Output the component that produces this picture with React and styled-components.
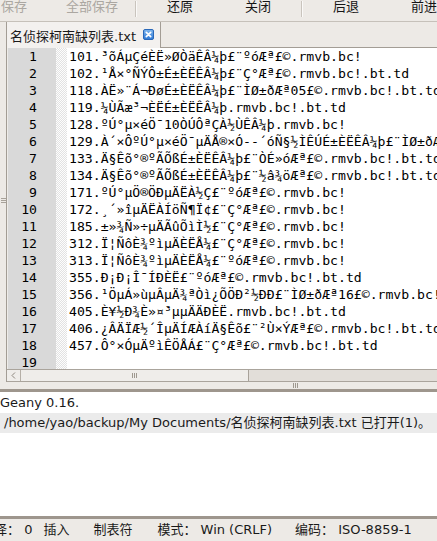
import React from 'react'
import styled, { createGlobalStyle } from 'styled-components'

const uiFont = `"DejaVu Sans", "Noto Sans CJK SC", sans-serif`
const monoFont = `"DejaVu Sans Mono", "Noto Sans CJK SC", monospace`

const GlobalStyle = createGlobalStyle`
  html, body {
    margin: 0;
    padding: 0;
    background: #edeae6;
    overflow: hidden;
  }
`

const Window = styled.div`
  width: 437px;
  height: 541px;
  overflow: hidden;
  display: flex;
  flex-direction: column;
  background: #edeae6;
  font-family: ${uiFont};
  font-size: 13px;
  color: #1a1a1a;
`

const Toolbar = styled.div`
  display: flex;
  flex: none;
  height: 21px;
  margin-left: -25px;
  border-bottom: 1px solid #c6c1ba;
`

const ToolButton = styled.div`
  flex: none;
  width: 78px;
  text-align: center;
  line-height: 14px;
  color: ${({ disabled }) => (disabled ? '#aba7a1' : '#151515')};
`

const ToolSep = styled.div`
  flex: none;
  width: 10px;
  display: flex;
  justify-content: center;
  padding-top: 1px;
  height: 16px;

  &::before {
    content: '';
    width: 1px;
    background: #c9c4bd;
    border-right: 1px solid #faf9f8;
  }
`

const Body = styled.div`
  display: flex;
  flex: none;
  height: 360px;
`

const SideStrip = styled.div`
  flex: none;
  width: 7px;
  border-right: 1px solid #a39d95;
  padding-top: 176px;
  box-sizing: border-box;
`

const SideGrip = styled.div`
  width: 5px;
  height: 5px;
  margin-left: 1px;
  background: repeating-linear-gradient(to bottom, #a8a29a 0 1px, transparent 1px 2px);
`

const Notebook = styled.div`
  flex: 1;
  min-width: 0;
  display: flex;
  flex-direction: column;
`

const TabBar = styled.div`
  display: flex;
  flex: none;
  height: 26px;
`

const Tab = styled.div`
  flex: none;
  width: 154px;
  box-sizing: border-box;
  display: flex;
  align-items: center;
  padding-left: 3px;
  background: #f3f1ef;
  border-right: 1px solid #a39d95;
  white-space: nowrap;
`

const TabLabel = styled.span`
  flex: 1;
`

const TabClose = styled.svg`
  flex: none;
  margin-right: 6px;
  margin-top: -1px;
`

const TabFill = styled.div`
  flex: 1;
  border-bottom: 1px solid #a39d95;
`

const Editor = styled.div`
  flex: 1;
  display: flex;
  overflow: hidden;
  background: #fff;
  font-family: ${monoFont};
  font-size: 13.15px;
  line-height: 17px;
  color: #000;
`

const Gutter = styled.div`
  flex: none;
  width: 49px;
  box-sizing: border-box;
  background: #d9d9d9;
  border-left: 1px solid #eeece9;
  text-align: right;
  padding-right: 19px;
`

const FoldMargin = styled.div`
  flex: none;
  width: 11px;
  background: repeating-conic-gradient(#e2e2e2 0 25%, #fdfdfd 0 50%) 0 0 / 2px 2px;
`

const CodeArea = styled.div`
  flex: 1;
  min-width: 0;
  padding-left: 2px;
  white-space: pre;
  overflow: hidden;
`

const Line = styled.div`
  height: 17px;
`

const HScroll = styled.div`
  flex: none;
  height: 11px;
  display: flex;
  background: #e2ded9;
  border-top: 1px solid #aaa49c;
  border-bottom: 1px solid #aaa49c;
`

const ScrollArrow = styled.div`
  flex: none;
  width: 13px;
  display: flex;
  align-items: center;
  justify-content: center;
  background: #efedea;
  border-right: 1px solid #b5afa7;
`

const ScrollThumb = styled.div`
  flex: none;
  width: 227px;
  display: flex;
  align-items: center;
  justify-content: center;
  background: #efedea;
  border-right: 1px solid #a8a29a;
`

const Grip = styled.div`
  width: 5px;
  height: 5px;
  background: repeating-linear-gradient(to right, #9e988f 0 1px, transparent 1px 2px);
`

const PaneHandle = styled.div`
  flex: none;
  height: 7px;
  display: flex;
  align-items: center;
  padding-left: 293px;
  box-sizing: border-box;
`

const MessagePane = styled.div`
  flex: none;
  height: 124px;
  background: #fff;
  border-top: 3px solid #9e968d;
`

const MessageRow = styled.div`
  height: ${({ h }) => h}px;
  line-height: ${({ h }) => h}px;
  padding-left: ${({ indent }) => indent}px;
  background: ${({ shaded }) => (shaded ? '#ebebeb' : 'transparent')};
  white-space: nowrap;
`

const StatusBar = styled.div`
  flex: none;
  height: 22px;
  display: flex;
  align-items: center;
  border-top: 3px solid #9e968d;
  white-space: nowrap;
  line-height: 22px;
`

const StatusItem = styled.span`
  flex: none;
  margin-left: ${({ gap }) => gap}px;
`

const lines = [
  '101.³õÁµÇéÈË»ØÒäÊÂ¼þ£¨ºóÆª£©.rmvb.bc!',
  '102.¹Å×°ÑÝÔ±É±ÈËÊÂ¼þ£¨Ç°Æª£©.rmvb.bc!.bt.td',
  '118.ÀË»¨Á¬ÐøÉ±ÈËÊÂ¼þ£¨ÌØ±ðÆª05£©.rmvb.bc!.bt.td',
  '119.¼ÙÃæ³¬ÈËÉ±ÈËÊÂ¼þ.rmvb.bc!.bt.td',
  '128.ºÚ°µ×éÖ¯10ÒÚÔªÇÀ½ÙÊÂ¼þ.rmvb.bc!',
  '129.À´×ÔºÚ°µ×éÖ¯µÄÅ®×Ó--´óÑ§½ÌÊÚÉ±ÈËÊÂ¼þ£¨ÌØ±ðÆª£©.rmvb.bc!',
  '133.Ä§Êõ°®ºÃÕßÉ±ÈËÊÂ¼þ£¨ÒÉ»óÆª£©.rmvb.bc!.bt.td',
  '134.Ä§Êõ°®ºÃÕßÉ±ÈËÊÂ¼þ£¨½â¾öÆª£©.rmvb.bc!.bt.td',
  '171.ºÚ°µÖ®ÖÐµÄËÀ½Ç£¨ºóÆª£©.rmvb.bc!',
  '172.¸´»îµÄËÀÍöÑ¶Ï¢£¨Ç°Æª£©.rmvb.bc!',
  '185.±»¾Ñ»÷µÄÃûÕìÌ½£¨Ç°Æª£©.rmvb.bc!',
  '312.Ï¦ÑôÈ¾ºìµÄÈËÅ¼£¨Ç°Æª£©.rmvb.bc!',
  '313.Ï¦ÑôÈ¾ºìµÄÈËÅ¼£¨ºóÆª£©.rmvb.bc!',
  '355.Ð¡Ð¡Î¯ÍÐÈË£¨ºóÆª£©.rmvb.bc!.bt.td',
  '356.¹ÖµÁ»ùµÂµÄ¾ªÒì¿ÕÖÐ²½ÐÐ£¨ÌØ±ðÆª16£©.rmvb.bc!.bt.td',
  '405.È¥½Ð¾È»¤³µµÄÄÐÈË.rmvb.bc!.bt.td',
  '406.¿ÂÄÏÆ½´ÎµÄÍÆÀíÄ§Êõ£¨²Ù×ÝÆª£©.rmvb.bc!.bt.td',
  '457.Ô°×ÓµÄºìÊÖÅÁ£¨Ç°Æª£©.rmvb.bc!.bt.td',
  '',
]

const tools = [
  { label: '保存', disabled: true },
  { label: '全部保存', disabled: true },
  { sep: true },
  { label: '还原' },
  { label: '关闭' },
  { sep: true },
  { label: '后退' },
  { label: '前进' },
]

const status = [
  { text: '选择： 0', gap: -19 },
  { text: '插入', gap: 11 },
  { text: '制表符', gap: 24 },
  { text: '模式： Win (CRLF)', gap: 25 },
  { text: '编码： ISO-8859-1', gap: 23 },
]

const CloseIcon = () =>
  <TabClose width="11" height="11" viewBox="0 0 11 11">
    <defs>
      <linearGradient id="closeFill" x1="0" y1="0" x2="0" y2="1">
        <stop offset="0" stopColor="#7fb6ee" />
        <stop offset="1" stopColor="#2f7ad6" />
      </linearGradient>
    </defs>
    <rect x="0.5" y="0.5" width="10" height="10" rx="1.5" fill="url(#closeFill)" stroke="#2a68b8" />
    <path d="M3.3 3.3 L7.7 7.7 M7.7 3.3 L3.3 7.7" stroke="#fff" strokeWidth="1.7" strokeLinecap="round" />
  </TabClose>

const App = () =>
  <Window>
    <GlobalStyle />
    <Toolbar>
      {tools.map((t, i) =>
        t.sep
          ? <ToolSep key={i} />
          : <ToolButton key={i} disabled={t.disabled}>{t.label}</ToolButton>
      )}
    </Toolbar>
    <Body>
      <SideStrip>
        <SideGrip />
      </SideStrip>
      <Notebook>
        <TabBar>
          <Tab>
            <TabLabel>名侦探柯南缺列表.txt</TabLabel>
            <CloseIcon />
          </Tab>
          <TabFill />
        </TabBar>
        <Editor>
          <Gutter>
            {lines.map((_, i) => <Line key={i}>{i + 1}</Line>)}
          </Gutter>
          <FoldMargin />
          <CodeArea>
            {lines.map((l, i) => <Line key={i}>{l}</Line>)}
          </CodeArea>
        </Editor>
        <HScroll>
          <ScrollArrow>
            <svg width="5" height="7" viewBox="0 0 5 7">
              <path d="M4 0.5 L1 3.5 L4 6.5" fill="none" stroke="#8d877f" strokeWidth="1" />
            </svg>
          </ScrollArrow>
          <ScrollThumb>
            <Grip />
          </ScrollThumb>
        </HScroll>
      </Notebook>
    </Body>
    <PaneHandle>
      <Grip />
    </PaneHandle>
    <MessagePane>
      <MessageRow h={21} indent={0}>Geany 0.16.</MessageRow>
      <MessageRow h={20} indent={4} shaded>/home/yao/backup/My Documents/名侦探柯南缺列表.txt 已打开(1)。</MessageRow>
    </MessagePane>
    <StatusBar>
      {status.map((s, i) => <StatusItem key={i} gap={s.gap}>{s.text}</StatusItem>)}
    </StatusBar>
  </Window>

export default App
